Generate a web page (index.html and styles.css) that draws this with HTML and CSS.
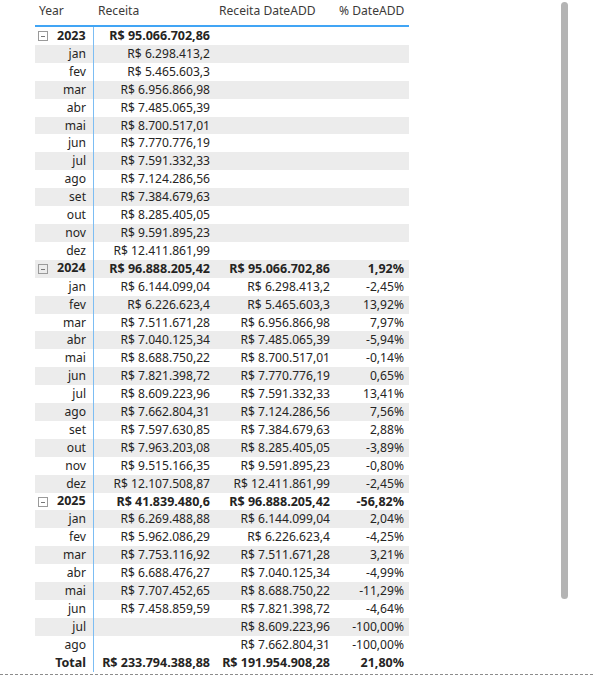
FILE: index.html
```html
<!DOCTYPE html>
<html>
<head>
<title>Receita por ano</title>
<link rel="stylesheet" href="styles.css">
</head>
<body>
<div class="visual">
  <div class="matrix">
    <div class="head">
      <div class="cell">Year</div>
      <div class="cell">Receita</div>
      <div class="cell">Receita DateADD</div>
      <div class="cell">% DateADD</div>
    </div>

    <div class="body">
      <div class="row group"><div class="cell year"><span class="toggle"></span>2023</div><div class="cell num">R$ 95.066.702,86</div><div class="cell num"></div><div class="cell num"></div></div>
      <div class="row"><div class="cell month">jan</div><div class="cell num">R$ 6.298.413,2</div><div class="cell num"></div><div class="cell num"></div></div>
      <div class="row"><div class="cell month">fev</div><div class="cell num">R$ 5.465.603,3</div><div class="cell num"></div><div class="cell num"></div></div>
      <div class="row"><div class="cell month">mar</div><div class="cell num">R$ 6.956.866,98</div><div class="cell num"></div><div class="cell num"></div></div>
      <div class="row"><div class="cell month">abr</div><div class="cell num">R$ 7.485.065,39</div><div class="cell num"></div><div class="cell num"></div></div>
      <div class="row"><div class="cell month">mai</div><div class="cell num">R$ 8.700.517,01</div><div class="cell num"></div><div class="cell num"></div></div>
      <div class="row"><div class="cell month">jun</div><div class="cell num">R$ 7.770.776,19</div><div class="cell num"></div><div class="cell num"></div></div>
      <div class="row"><div class="cell month">jul</div><div class="cell num">R$ 7.591.332,33</div><div class="cell num"></div><div class="cell num"></div></div>
      <div class="row"><div class="cell month">ago</div><div class="cell num">R$ 7.124.286,56</div><div class="cell num"></div><div class="cell num"></div></div>
      <div class="row"><div class="cell month">set</div><div class="cell num">R$ 7.384.679,63</div><div class="cell num"></div><div class="cell num"></div></div>
      <div class="row"><div class="cell month">out</div><div class="cell num">R$ 8.285.405,05</div><div class="cell num"></div><div class="cell num"></div></div>
      <div class="row"><div class="cell month">nov</div><div class="cell num">R$ 9.591.895,23</div><div class="cell num"></div><div class="cell num"></div></div>
      <div class="row"><div class="cell month">dez</div><div class="cell num">R$ 12.411.861,99</div><div class="cell num"></div><div class="cell num"></div></div>

      <div class="row group"><div class="cell year"><span class="toggle"></span>2024</div><div class="cell num">R$ 96.888.205,42</div><div class="cell num">R$ 95.066.702,86</div><div class="cell num">1,92%</div></div>
      <div class="row"><div class="cell month">jan</div><div class="cell num">R$ 6.144.099,04</div><div class="cell num">R$ 6.298.413,2</div><div class="cell num">-2,45%</div></div>
      <div class="row"><div class="cell month">fev</div><div class="cell num">R$ 6.226.623,4</div><div class="cell num">R$ 5.465.603,3</div><div class="cell num">13,92%</div></div>
      <div class="row"><div class="cell month">mar</div><div class="cell num">R$ 7.511.671,28</div><div class="cell num">R$ 6.956.866,98</div><div class="cell num">7,97%</div></div>
      <div class="row"><div class="cell month">abr</div><div class="cell num">R$ 7.040.125,34</div><div class="cell num">R$ 7.485.065,39</div><div class="cell num">-5,94%</div></div>
      <div class="row"><div class="cell month">mai</div><div class="cell num">R$ 8.688.750,22</div><div class="cell num">R$ 8.700.517,01</div><div class="cell num">-0,14%</div></div>
      <div class="row"><div class="cell month">jun</div><div class="cell num">R$ 7.821.398,72</div><div class="cell num">R$ 7.770.776,19</div><div class="cell num">0,65%</div></div>
      <div class="row"><div class="cell month">jul</div><div class="cell num">R$ 8.609.223,96</div><div class="cell num">R$ 7.591.332,33</div><div class="cell num">13,41%</div></div>
      <div class="row"><div class="cell month">ago</div><div class="cell num">R$ 7.662.804,31</div><div class="cell num">R$ 7.124.286,56</div><div class="cell num">7,56%</div></div>
      <div class="row"><div class="cell month">set</div><div class="cell num">R$ 7.597.630,85</div><div class="cell num">R$ 7.384.679,63</div><div class="cell num">2,88%</div></div>
      <div class="row"><div class="cell month">out</div><div class="cell num">R$ 7.963.203,08</div><div class="cell num">R$ 8.285.405,05</div><div class="cell num">-3,89%</div></div>
      <div class="row"><div class="cell month">nov</div><div class="cell num">R$ 9.515.166,35</div><div class="cell num">R$ 9.591.895,23</div><div class="cell num">-0,80%</div></div>
      <div class="row"><div class="cell month">dez</div><div class="cell num">R$ 12.107.508,87</div><div class="cell num">R$ 12.411.861,99</div><div class="cell num">-2,45%</div></div>

      <div class="row group"><div class="cell year"><span class="toggle"></span>2025</div><div class="cell num">R$ 41.839.480,6</div><div class="cell num">R$ 96.888.205,42</div><div class="cell num">-56,82%</div></div>
      <div class="row"><div class="cell month">jan</div><div class="cell num">R$ 6.269.488,88</div><div class="cell num">R$ 6.144.099,04</div><div class="cell num">2,04%</div></div>
      <div class="row"><div class="cell month">fev</div><div class="cell num">R$ 5.962.086,29</div><div class="cell num">R$ 6.226.623,4</div><div class="cell num">-4,25%</div></div>
      <div class="row"><div class="cell month">mar</div><div class="cell num">R$ 7.753.116,92</div><div class="cell num">R$ 7.511.671,28</div><div class="cell num">3,21%</div></div>
      <div class="row"><div class="cell month">abr</div><div class="cell num">R$ 6.688.476,27</div><div class="cell num">R$ 7.040.125,34</div><div class="cell num">-4,99%</div></div>
      <div class="row"><div class="cell month">mai</div><div class="cell num">R$ 7.707.452,65</div><div class="cell num">R$ 8.688.750,22</div><div class="cell num">-11,29%</div></div>
      <div class="row"><div class="cell month">jun</div><div class="cell num">R$ 7.458.859,59</div><div class="cell num">R$ 7.821.398,72</div><div class="cell num">-4,64%</div></div>
      <div class="row"><div class="cell month">jul</div><div class="cell num"></div><div class="cell num">R$ 8.609.223,96</div><div class="cell num">-100,00%</div></div>
      <div class="row"><div class="cell month">ago</div><div class="cell num"></div><div class="cell num">R$ 7.662.804,31</div><div class="cell num">-100,00%</div></div>
    </div>

    <div class="row total"><div class="cell month">Total</div><div class="cell num">R$ 233.794.388,88</div><div class="cell num">R$ 191.954.908,28</div><div class="cell num">21,80%</div></div>
  </div>

  <div class="scrollbar"></div>
</div>
</body>
</html>
```

FILE: styles.css
```css
body {
  margin: 0;
  padding: 0;
  background-color: #fff;
  font-family: "Segoe UI", "Noto Sans", sans-serif;
  font-size: 12.1px;
  color: #252423;
}

.visual {
  position: relative;
  height: 675px;
  width: 593px;
}

.visual::after {
  content: "";
  position: absolute;
  left: 0;
  right: 0;
  bottom: 0;
  height: 1px;
  background: repeating-linear-gradient(90deg, #8c8c8c 0 3px, transparent 3px 5px);
}

.matrix {
  margin-left: 35px;
  width: 374px;
}

.head,
.row {
  display: grid;
  grid-template-columns: 59px 121px 120px 74px;
}

.head {
  height: 25px;
  line-height: 22px;
  border-bottom: 2px solid #41a5f5;
}

.head .cell {
  padding-left: 4px;
  color: #3b3a39;
}

.row {
  height: 17.92px;
  line-height: 18.5px;
}

.body .row:nth-child(even) {
  background-color: #ececec;
}

.cell {
  white-space: nowrap;
  overflow: hidden;
}

.row .cell:first-child {
  border-right: 1px solid #7cbdf3;
}

.num {
  text-align: right;
  padding-right: 5px;
}

.month {
  text-align: right;
  padding-right: 7px;
}

.year {
  display: flex;
  align-items: center;
  padding-left: 3px;
}

.group .cell,
.total .cell {
  font-weight: bold;
  font-size: 12.5px;
}

.toggle {
  position: relative;
  width: 8px;
  height: 8px;
  border: 1px solid #9a9a9a;
  margin-right: 9px;
}

.toggle::after {
  content: "";
  position: absolute;
  left: 2px;
  right: 2px;
  top: 4px;
  height: 1px;
  background-color: #777;
}

.scrollbar {
  position: absolute;
  left: 561px;
  top: 2px;
  width: 7px;
  height: 597px;
  border-radius: 4px;
  background-color: #b4b4b4;
}
```
